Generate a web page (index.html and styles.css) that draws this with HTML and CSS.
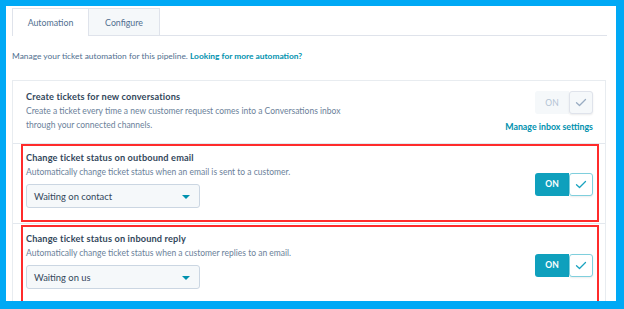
FILE: index.html
```html
<!DOCTYPE html>
<html>
<head>
<meta charset="utf-8">
<link rel="stylesheet" href="styles.css">
</head>
<body>
<div class="frame">
  <div class="page">
    <div class="tabs">
      <div class="tab active">Automation</div>
      <div class="tab">Configure</div>
    </div>
    <p class="intro">Manage your ticket automation for this pipeline. <a class="link">Looking for more automation?</a></p>
    <div class="card">
      <div class="row first">
        <div class="info">
          <div class="title">Create tickets for new conversations</div>
          <div class="desc">Create a ticket every time a new customer request comes into a Conversations inbox<br>through your connected channels.</div>
        </div>
        <div class="side">
          <div class="toggle off">
            <span class="on">ON</span>
            <span class="check"><svg width="12" height="9" viewBox="0 0 12 9"><path d="M1.5 4.8 L4.5 7.5 L10.5 1.5" fill="none" stroke="currentColor" stroke-width="1.3" stroke-linecap="round" stroke-linejoin="round"/></svg></span>
          </div>
          <a class="link small">Manage inbox settings</a>
        </div>
      </div>
      <div class="row hl">
        <div class="redbox">
          <div class="info">
            <div class="title">Change ticket status on outbound email</div>
            <div class="desc">Automatically change ticket status when an email is sent to a customer.</div>
            <div class="select"><span>Waiting on contact</span><span class="caret"></span></div>
          </div>
          <div class="toggle">
            <span class="on">ON</span>
            <span class="check"><svg width="12" height="9" viewBox="0 0 12 9"><path d="M1.5 4.8 L4.5 7.5 L10.5 1.5" fill="none" stroke="currentColor" stroke-width="1.3" stroke-linecap="round" stroke-linejoin="round"/></svg></span>
          </div>
        </div>
      </div>
      <div class="row hl">
        <div class="redbox">
          <div class="info">
            <div class="title">Change ticket status on inbound reply</div>
            <div class="desc">Automatically change ticket status when a customer replies to an email.</div>
            <div class="select"><span>Waiting on us</span><span class="caret"></span></div>
          </div>
          <div class="toggle">
            <span class="on">ON</span>
            <span class="check"><svg width="12" height="9" viewBox="0 0 12 9"><path d="M1.5 4.8 L4.5 7.5 L10.5 1.5" fill="none" stroke="currentColor" stroke-width="1.3" stroke-linecap="round" stroke-linejoin="round"/></svg></span>
          </div>
        </div>
      </div>
    </div>
  </div>
</div>
</body>
</html>
```

FILE: styles.css
```css
* { box-sizing: border-box; }
html, body { margin: 0; padding: 0; }
body {
  font-family: Lato, "Noto Sans", sans-serif;
  color: #33475b;
  background: #00a9f5;
}
.frame {
  width: 624px;
  height: 309px;
  border-style: solid;
  border-color: #00a9f5;
  border-width: 6px 8px 8px 6px;
  background: #fff;
  overflow: hidden;
}
.page {
  padding: 2px 9px 0 6px;
}
.tabs {
  display: flex;
  height: 28px;
  border-bottom: 1px solid #dfe3eb;
}
.tab {
  display: flex;
  align-items: center;
  justify-content: center;
  font-size: 8.8px;
  color: #516f90;
  background: #f5f8fa;
  border: 1px solid #dfe3eb;
  border-left: none;
  border-bottom: none;
  width: 71px;
}
.tab.active {
  background: #fff;
  border-left: 1px solid #dfe3eb;
  width: 77px;
  margin-bottom: -1px;
  height: 28px;
}
.intro {
  margin: 13px 0 0 0;
  font-size: 8.4px;
  line-height: 14px;
  color: #516f90;
}
.link {
  color: #0091ae;
  font-weight: 700;
}
.card {
  margin: 17px 1px 0 0;
  border: 1px solid #e8ecf0;
  border-bottom: none;
}
.row {
  display: flex;
}
.row.first {
  justify-content: space-between;
  padding: 9px 12px 10px 13px;
}
.row.hl {
  border-top: 1px solid #e3e8ee;
  padding: 0 6px 1px 8px;
}
.row.hl + .row.hl { padding-top: 1px; }
.redbox {
  flex: 1;
  display: flex;
  justify-content: space-between;
  align-items: center;
  border: 2px solid #ff2b2b;
  padding: 5px 4px 12px 3px;
}
.title {
  font-size: 9.2px;
  font-weight: 700;
  line-height: 14px;
  color: #33475b;
  letter-spacing: 0.15px;
}
.desc {
  font-size: 8.5px;
  line-height: 14px;
  color: #6b819a;
}
.side {
  display: flex;
  flex-direction: column;
  align-items: flex-end;
  padding-top: 1px;
}
.side .small {
  font-size: 8.8px;
  margin-top: 7px;
  line-height: 12px;
}
.select {
  margin-top: 5px;
  width: 174px;
  height: 24px;
  background: #f5f8fa;
  border: 1px solid #cbd6e2;
  border-radius: 3px;
  display: flex;
  align-items: center;
  justify-content: space-between;
  padding: 0 9px 0 7px;
  font-size: 9.4px;
  color: #33475b;
}
.caret {
  width: 0;
  height: 0;
  border-left: 4px solid transparent;
  border-right: 4px solid transparent;
  border-top: 4px solid #0091ae;
  margin-top: 1px;
}
.toggle {
  display: flex;
  height: 23px;
  margin-top: 9px;
}
.toggle .on {
  width: 34px;
  display: flex;
  align-items: center;
  justify-content: center;
  background: #0fa0bd;
  color: #fff;
  font-size: 8.5px;
  font-weight: 700;
  border-radius: 3px 0 0 3px;
}
.toggle .check {
  width: 24px;
  display: flex;
  align-items: center;
  justify-content: center;
  background: #fff;
  border: 1px solid #7fcfdd;
  border-radius: 3px;
  color: #1aa3bf;
  box-shadow: 0 1px 2px rgba(0,0,0,0.08);
}
.toggle.off { margin-top: 0; }
.toggle.off .on {
  background: #f5f8fa;
  color: #b3c3d4;
  font-weight: 400;
}
.toggle.off .check {
  background: #f5f8fa;
  border-color: #dfe3eb;
  color: #99acc2;
}
```
